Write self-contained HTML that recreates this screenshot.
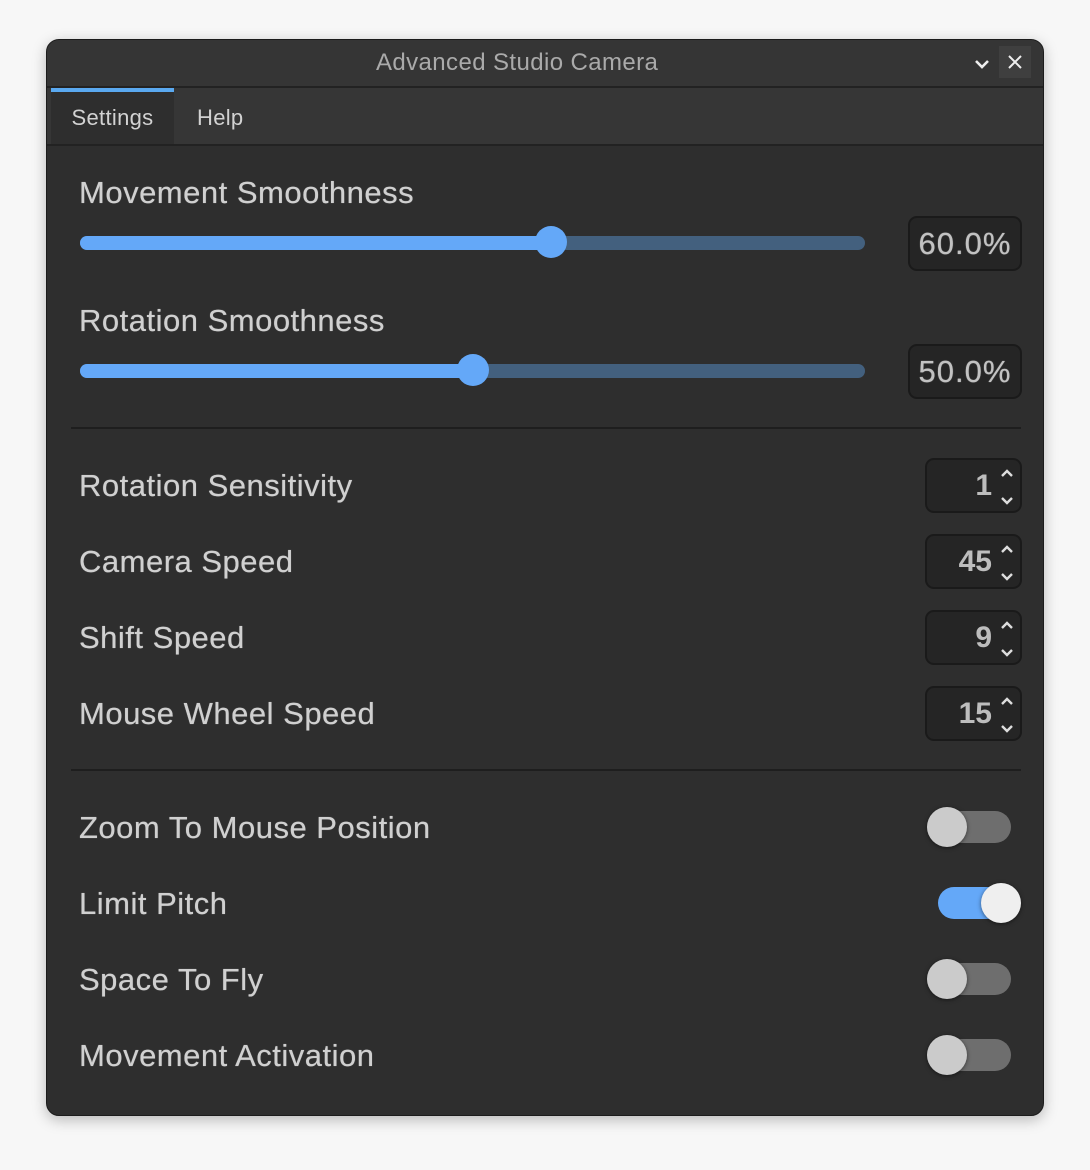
<!DOCTYPE html>
<html><head><meta charset="utf-8"><style>
*{margin:0;padding:0;box-sizing:border-box}
body{width:1090px;height:1170px;background:#f7f7f7;position:relative;overflow:hidden;font-family:"Liberation Sans",sans-serif}
.win{position:absolute;left:46px;top:39px;width:998px;height:1077px;background:#2e2e2e;border-radius:13px;border:1px solid #1c1c1c;box-shadow:0 4px 14px rgba(0,0,0,.25);overflow:hidden}
.title{position:absolute;left:0;top:0;width:100%;height:48px;background:#353535;border-bottom:2px solid #222;color:#aaa;font-size:23px;line-height:46px}
.tabs{position:absolute;left:0;top:48px;width:100%;height:58px;background:#363636;border-bottom:2px solid #222}
.tab{position:absolute;top:0;height:56px;line-height:60px;font-size:22px;color:#d2d2d2;letter-spacing:0.3px}
.abs{position:absolute}
.lbl{position:absolute;left:32px;color:#d0d0d0;font-size:31px;line-height:30px;letter-spacing:0.5px;text-shadow:0 0 0.6px #d0d0d0}
.track{position:absolute;left:33px;width:785px;height:14px;border-radius:7px;background:#43607e}
.fill{position:absolute;left:0;top:0;height:14px;border-radius:7px;background:#64a8f8}
.thumb{position:absolute;width:32px;height:32px;border-radius:50%;background:#64a8f8}
.vbox{position:absolute;left:861px;width:114px;height:55px;background:#252525;border:2px solid #1a1a1a;border-radius:9px;color:#c2c2c2;font-size:31px;text-align:center;line-height:52px;letter-spacing:1px;text-shadow:0 0 0.8px #c2c2c2}
.nbox{position:absolute;left:878px;width:97px;height:55px;background:#252525;border:2px solid #1a1a1a;border-radius:9px;color:#bdbdbd;font-size:30px;line-height:52px;text-align:right;padding-right:28px;font-weight:bold}
.nbox svg{position:absolute;right:6px;top:8px}
.div{position:absolute;left:24px;width:950px;height:2px;background:#1e1e1e}
.tt{position:absolute;width:84px;height:32px;border-radius:16px;background:#6e6e6e}
.kn{position:absolute;width:40px;height:40px;border-radius:50%;background:#cbcbcb;box-shadow:0 1px 4px rgba(0,0,0,.5)}
</style></head><body>
<div class="win">
 <div class="title"><span class="abs" style="left:329px;top:0;letter-spacing:0.4px;font-size:24px">Advanced Studio Camera</span>
  <svg class="abs" style="left:926px;top:18px" width="18" height="12" viewBox="0 0 18 12"><path d="M3 3 L9 9 L15 3" stroke="#eee" stroke-width="2.6" fill="none"/></svg>
  <div class="abs" style="left:952px;top:6px;width:32px;height:32px;background:#3f3f3f"></div>
  <svg class="abs" style="left:960px;top:14px" width="16" height="16" viewBox="0 0 16 16"><path d="M2 2 L14 14 M14 2 L2 14" stroke="#eee" stroke-width="2" fill="none"/></svg>
 </div>
 <div class="tabs">
  <div class="tab" style="left:4px;width:123px;background:#2e2e2e;text-align:center">Settings</div>
  <div class="abs" style="left:4px;top:0;width:123px;height:4px;background:#5aa9f0"></div>
  <div class="tab" style="left:150px">Help</div>
 </div>

 <div class="lbl" style="top:138px">Movement Smoothness</div>
 <div class="track" style="top:196px"><div class="fill" style="width:472px"></div></div>
 <div class="thumb" style="left:488px;top:186px"></div>
 <div class="vbox" style="top:176px">60.0%</div>

 <div class="lbl" style="top:266px">Rotation Smoothness</div>
 <div class="track" style="top:324px"><div class="fill" style="width:394px"></div></div>
 <div class="thumb" style="left:410px;top:314px"></div>
 <div class="vbox" style="top:304px">50.0%</div>

 <div class="div" style="top:387px"></div>

 <div class="lbl" style="top:431px">Rotation Sensitivity</div>
 <div class="nbox" style="top:418px">1<svg width="14" height="38" viewBox="0 0 14 38"><path d="M2 8 L7 3 L12 8 M2 30 L7 35 L12 30" stroke="#ddd" stroke-width="2.4" fill="none"/></svg></div>
 <div class="lbl" style="top:507px">Camera Speed</div>
 <div class="nbox" style="top:494px">45<svg width="14" height="38" viewBox="0 0 14 38"><path d="M2 8 L7 3 L12 8 M2 30 L7 35 L12 30" stroke="#ddd" stroke-width="2.4" fill="none"/></svg></div>
 <div class="lbl" style="top:583px">Shift Speed</div>
 <div class="nbox" style="top:570px">9<svg width="14" height="38" viewBox="0 0 14 38"><path d="M2 8 L7 3 L12 8 M2 30 L7 35 L12 30" stroke="#ddd" stroke-width="2.4" fill="none"/></svg></div>
 <div class="lbl" style="top:659px">Mouse Wheel Speed</div>
 <div class="nbox" style="top:646px">15<svg width="14" height="38" viewBox="0 0 14 38"><path d="M2 8 L7 3 L12 8 M2 30 L7 35 L12 30" stroke="#ddd" stroke-width="2.4" fill="none"/></svg></div>

 <div class="div" style="top:729px"></div>

 <div class="lbl" style="top:773px">Zoom To Mouse Position</div>
 <div class="tt" style="left:880px;top:771px"></div><div class="kn" style="left:880px;top:767px"></div>
 <div class="lbl" style="top:849px">Limit Pitch</div>
 <div class="tt" style="left:891px;top:847px;width:80px;background:#64a8f8"></div><div class="kn" style="left:934px;top:843px;background:#efefef"></div>
 <div class="lbl" style="top:925px">Space To Fly</div>
 <div class="tt" style="left:880px;top:923px"></div><div class="kn" style="left:880px;top:919px"></div>
 <div class="lbl" style="top:1001px">Movement Activation</div>
 <div class="tt" style="left:880px;top:999px"></div><div class="kn" style="left:880px;top:995px"></div>
</div>
</body></html>
